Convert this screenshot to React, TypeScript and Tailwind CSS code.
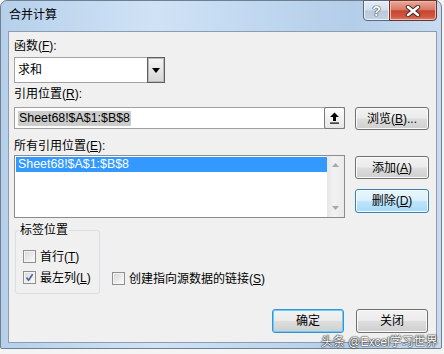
import React from "react";

const ui = "font-['Liberation_Sans','Noto_Sans_CJK_SC',sans-serif] text-[12px] text-black";

type Variant = "normal" | "hover" | "default";

const buttonStyles: Record<Variant, string> = {
  normal:
    "border-[#707070] bg-[linear-gradient(#f2f2f2_0%,#ebebeb_48%,#dddddd_52%,#cfcfcf_100%)] shadow-[inset_0_0_0_1px_#fbfbfb]",
  hover:
    "border-[#3c7fb1] bg-[linear-gradient(#eaf6fd_0%,#d9f0fc_48%,#bee6fd_52%,#a7d9f5_100%)] shadow-[inset_0_0_0_1px_#f4fbff]",
  default:
    "border-[#3d8fd0] bg-[linear-gradient(#f2f2f2_0%,#ebebeb_48%,#dddddd_52%,#cfcfcf_100%)] shadow-[inset_0_0_0_1px_#5fd3fb]",
};

function WinButton({
  children,
  variant = "normal",
  className = "",
}: {
  children: React.ReactNode;
  variant?: Variant;
  className?: string;
}) {
  return (
    <div
      className={`flex items-center justify-center rounded-[3px] border leading-none ${buttonStyles[variant]} ${className}`}
    >
      {children}
    </div>
  );
}

function CheckBox({ checked = false }: { checked?: boolean }) {
  return (
    <div className="relative h-[13px] w-[13px] shrink-0 border border-[#8e8f8f] bg-[linear-gradient(135deg,#d6d6d6,#fdfdfd)] shadow-[inset_0_0_0_1px_#f4f4f4]">
      {checked && (
        <svg width="11" height="11" viewBox="0 0 11 11" className="absolute left-0 top-0">
          <path d="M2.5 5.5 L4.6 8.2 L8.6 2.3" fill="none" stroke="#4a5f9c" strokeWidth="1.6" />
        </svg>
      )}
    </div>
  );
}

function Label({ children, className = "" }: { children: React.ReactNode; className?: string }) {
  return <div className={`h-[16px] leading-[16px] ${className}`}>{children}</div>;
}

export default function App() {
  return (
    <div className={`relative h-[354px] w-[444px] overflow-hidden bg-[#f4f4f4] ${ui}`}>
      <div className="flex h-[349px] w-[442px] flex-col rounded-t-[7px] rounded-b-[2px] border border-[#6f7f90] bg-[linear-gradient(90deg,#b6d0eb_0%,#cfe3f6_35%,#bfd7ef_60%,#b4cde9_80%,#c7dcf2_100%)]">
        {/* title bar */}
        <div className="flex h-[30px] items-start">
          <div className="ml-[8px] mt-[6px] leading-[16px]">合并计算</div>
          <div className="-mt-px ml-auto mr-[4px] flex h-[21px]">
            <div className="flex w-[27px] items-center justify-center rounded-bl-[4px] border border-[#56687c] bg-[linear-gradient(#e4ecf5_0%,#d3dfeb_48%,#b9c9db_52%,#c4d3e3_100%)] shadow-[inset_0_0_0_1px_#eef3f9]">
              <span className="text-[14px] font-bold leading-none text-white [text-shadow:0_0_1px_#2c3a4a,0_0_1px_#2c3a4a,0_0_1px_#2c3a4a]">
                ?
              </span>
            </div>
            <div className="-ml-px flex w-[48px] items-center justify-center rounded-br-[4px] border border-[#6e3328] bg-[linear-gradient(#e9a999_0%,#da7a66_45%,#c7452f_52%,#cf5b45_85%,#de8a73_100%)] shadow-[inset_0_0_0_1px_#f0b8aa]">
              <svg width="16" height="12" viewBox="0 0 16 12">
                <path d="M3 2 L13 10 M13 2 L3 10" stroke="#3b2420" strokeWidth="4.4" strokeLinecap="round" />
                <path d="M3 2 L13 10 M13 2 L3 10" stroke="#ffffff" strokeWidth="2.6" strokeLinecap="round" />
              </svg>
            </div>
          </div>
        </div>

        {/* client area */}
        <div className="ml-[7px] mr-[4px] flex h-[312px] flex-col border border-[#8e9cad] bg-[#f0f0f0] pl-[5px] pt-[6px]">
          <Label>
            函数(<u>F</u>):
          </Label>
          <div className="mt-[3px] flex h-[26px] w-[151px] border border-[#a3a3a3] bg-white">
            <div className="flex flex-1 items-center pl-[3px]">求和</div>
            <div className="-my-px -mr-px flex w-[18px] items-center justify-center border border-[#5f5f5f] bg-[linear-gradient(#f6f6f6,#d6d6d6)] shadow-[inset_0_0_0_1px_#b9b9b9]">
              <svg width="8" height="5" viewBox="0 0 8 5">
                <path d="M0 0 H8 L4 5 Z" fill="#000" />
              </svg>
            </div>
          </div>

          <Label className="mt-[3px]">
            引用位置(<u>R</u>):
          </Label>
          <div className="mt-[5px] flex items-start">
            <div className="flex h-[22px] w-[331px] border border-[#a0a0a0] bg-white">
              <div className="flex flex-1 items-center pl-[3px]">
                <span className="bg-[#cccccc] px-px text-[12.4px] leading-[15px]">Sheet68!$A$1:$B$8</span>
              </div>
              <div className="-my-px -mr-px flex w-[21px] items-center justify-center rounded-[2px] border border-[#7a7a7a] bg-[linear-gradient(#fdfdfd,#e6e6e6)]">
                <svg width="11" height="12" viewBox="0 0 11 12">
                  <path d="M5.5 0.5 L10 5 H7 V9 H4 V5 H1 Z" fill="#000" />
                  <rect x="1" y="10.5" width="9" height="1.2" fill="#000" />
                </svg>
              </div>
            </div>
            <WinButton className="ml-[10px] h-[23px] w-[74px]">
              浏览(<u>B</u>)...
            </WinButton>
          </div>

          <Label className="mt-[8px]">
            所有引用位置(<u>E</u>):
          </Label>
          <div className="mt-px flex items-start">
            <div className="flex h-[63px] w-[331px] border border-[#8c8c8c] bg-white">
              <div className="flex-1 pl-px pt-px">
                <div className="flex h-[15px] items-center bg-[#3399ff] pl-[2px] text-[12.4px] text-white">
                  Sheet68!$A$1:$B$8
                </div>
              </div>
              <div className="flex w-[17px] flex-col items-center justify-between bg-[linear-gradient(90deg,#e6e6e6,#f2f2f2_40%,#eaeaea)] py-[7px]">
                <svg width="7" height="4" viewBox="0 0 7 4">
                  <path d="M0 4 L3.5 0 L7 4 Z" fill="#a8a8a8" />
                </svg>
                <svg width="7" height="4" viewBox="0 0 7 4">
                  <path d="M0 0 H7 L3.5 4 Z" fill="#a8a8a8" />
                </svg>
              </div>
            </div>
            <div className="ml-[10px] flex flex-col">
              <WinButton className="mt-px h-[23px] w-[74px]">
                添加(<u>A</u>)
              </WinButton>
              <WinButton variant="hover" className="mt-[10px] h-[24px] w-[74px]">
                删除(<u>D</u>)
              </WinButton>
            </div>
          </div>

          <div className="flex items-start">
            <div className="relative ml-px mt-[12px] h-[64px] w-[85px] rounded-[3px] border border-[#d5dfe5] pl-[7px] pt-[19px]">
              <div className="absolute -top-[9px] left-[3px] bg-[#f0f0f0] px-px leading-[16px]">标签位置</div>
              <div className="flex h-[13px] items-center gap-[4px]">
                <CheckBox />
                <span className="leading-none">
                  首行(<u>T</u>)
                </span>
              </div>
              <div className="mt-[8px] flex h-[13px] items-center gap-[4px]">
                <CheckBox checked />
                <span className="leading-none">
                  最左列(<u>L</u>)
                </span>
              </div>
            </div>
            <div className="ml-[12px] mt-[54px] flex h-[13px] items-center gap-[4px]">
              <CheckBox />
              <span className="leading-none">
                创建指向源数据的链接(<u>S</u>)
              </span>
            </div>
          </div>

          <div className="mt-[15px] flex justify-end gap-[12px] pr-[8px]">
            <WinButton variant="default" className="h-[24px] w-[72px]">
              确定
            </WinButton>
            <WinButton className="h-[24px] w-[72px]">关闭</WinButton>
          </div>
        </div>
      </div>

      {/* watermark over the dialog */}
      <div className="absolute left-[321px] top-[334px] whitespace-nowrap text-[12px] leading-[16px] text-white [text-shadow:0_0_1px_#222,0_0_1px_#222,0_0_2px_#333]">
        头条 @Excel学习世界
      </div>
    </div>
  );
}
